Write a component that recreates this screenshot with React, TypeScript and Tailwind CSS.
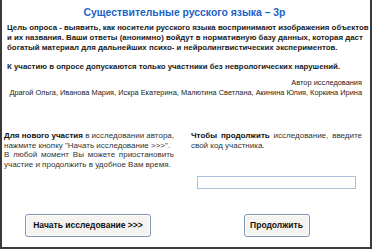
const J = "block w-full text-justify [text-align-last:justify] whitespace-nowrap";

export default function App() {
  return (
    <div className="w-[372px] h-[249px] bg-white border-x-2 border-b-2 border-[#3a3a3a] overflow-hidden font-['Liberation_Sans',Arial,sans-serif]">
      <div className="pl-[5px] pr-[8px] pt-[5px]">
        <h1 className="text-center text-[10.4px] leading-[16px] font-bold text-[#1d62c8]">
          Существительные русского языка – 3р
        </h1>
        <div className="mt-[2px] text-[7.85px] leading-[10px] font-bold text-[#1a1a1a]">
          <p>
            <span className={J}>Цель опроса - выявить, как носители русского языка воспринимают изображения объектов</span>
            <span className={J}>и их названия. Ваши ответы (анонимно) войдут в нормативную базу данных, которая даст</span>
            <span className="block whitespace-nowrap">богатый материал для дальнейших психо- и нейролингвистических экспериментов.</span>
          </p>
          <p className="mt-[9px] whitespace-nowrap">
            К участию в опросе допускаются только участники без неврологических нарушений.
          </p>
        </div>
        <div className="mt-[6px] text-[7.4px] leading-[10px] text-[#222]">
          <p className="text-right">Автор исследования</p>
          <p className="text-right whitespace-nowrap">
            Драгой Ольга, Иванова Мария, Искра Екатерина, Малютина Светлана, Акинина Юлия, Коркина Ирина
          </p>
        </div>
        <div className="mt-[33px] flex gap-[17px] text-[8px] leading-[9.6px] text-[#333]">
          <div className="w-[170px] ml-[-3px]">
            <span className={J}>
              <b className="text-[#111]">Для нового участия</b> в исследовании автора,
            </span>
            <span className="block whitespace-nowrap">нажмите кнопку "Начать исследование &gt;&gt;&gt;".</span>
            <span className={J}>В любой момент Вы можете приостановить</span>
            <span className="block whitespace-nowrap">участие и продолжить в удобное Вам время.</span>
          </div>
          <div className="flex-1 flex flex-col">
            <span className={J}>
              <b className="text-[#111]">Чтобы продолжить</b> исследование, введите
            </span>
            <span className="block whitespace-nowrap">свой код участника.</span>
            <input
              type="text"
              className="mt-[26px] ml-[6px] w-[159px] h-[13px] border border-[#a9c0dd] bg-white outline-none"
            />
          </div>
        </div>
        <div className="mt-[25px] flex">
          <div className="w-[186px] flex justify-center">
            <button className="ml-[-24px] h-[23px] w-[126px] rounded-[3px] border border-[#7f94b3] bg-[#f4f3ef] text-[8.5px] font-bold text-[#111] shadow-[inset_0_0_0_1px_#fff]">
              Начать исследование &gt;&gt;&gt;
            </button>
          </div>
          <div className="flex-1 flex justify-center">
            <button className="ml-[-2px] h-[23px] w-[66px] rounded-[3px] border border-[#7f94b3] bg-[#f4f3ef] text-[8.5px] font-bold text-[#111] shadow-[inset_0_0_0_1px_#fff]">
              Продолжить
            </button>
          </div>
        </div>
      </div>
    </div>
  );
}
